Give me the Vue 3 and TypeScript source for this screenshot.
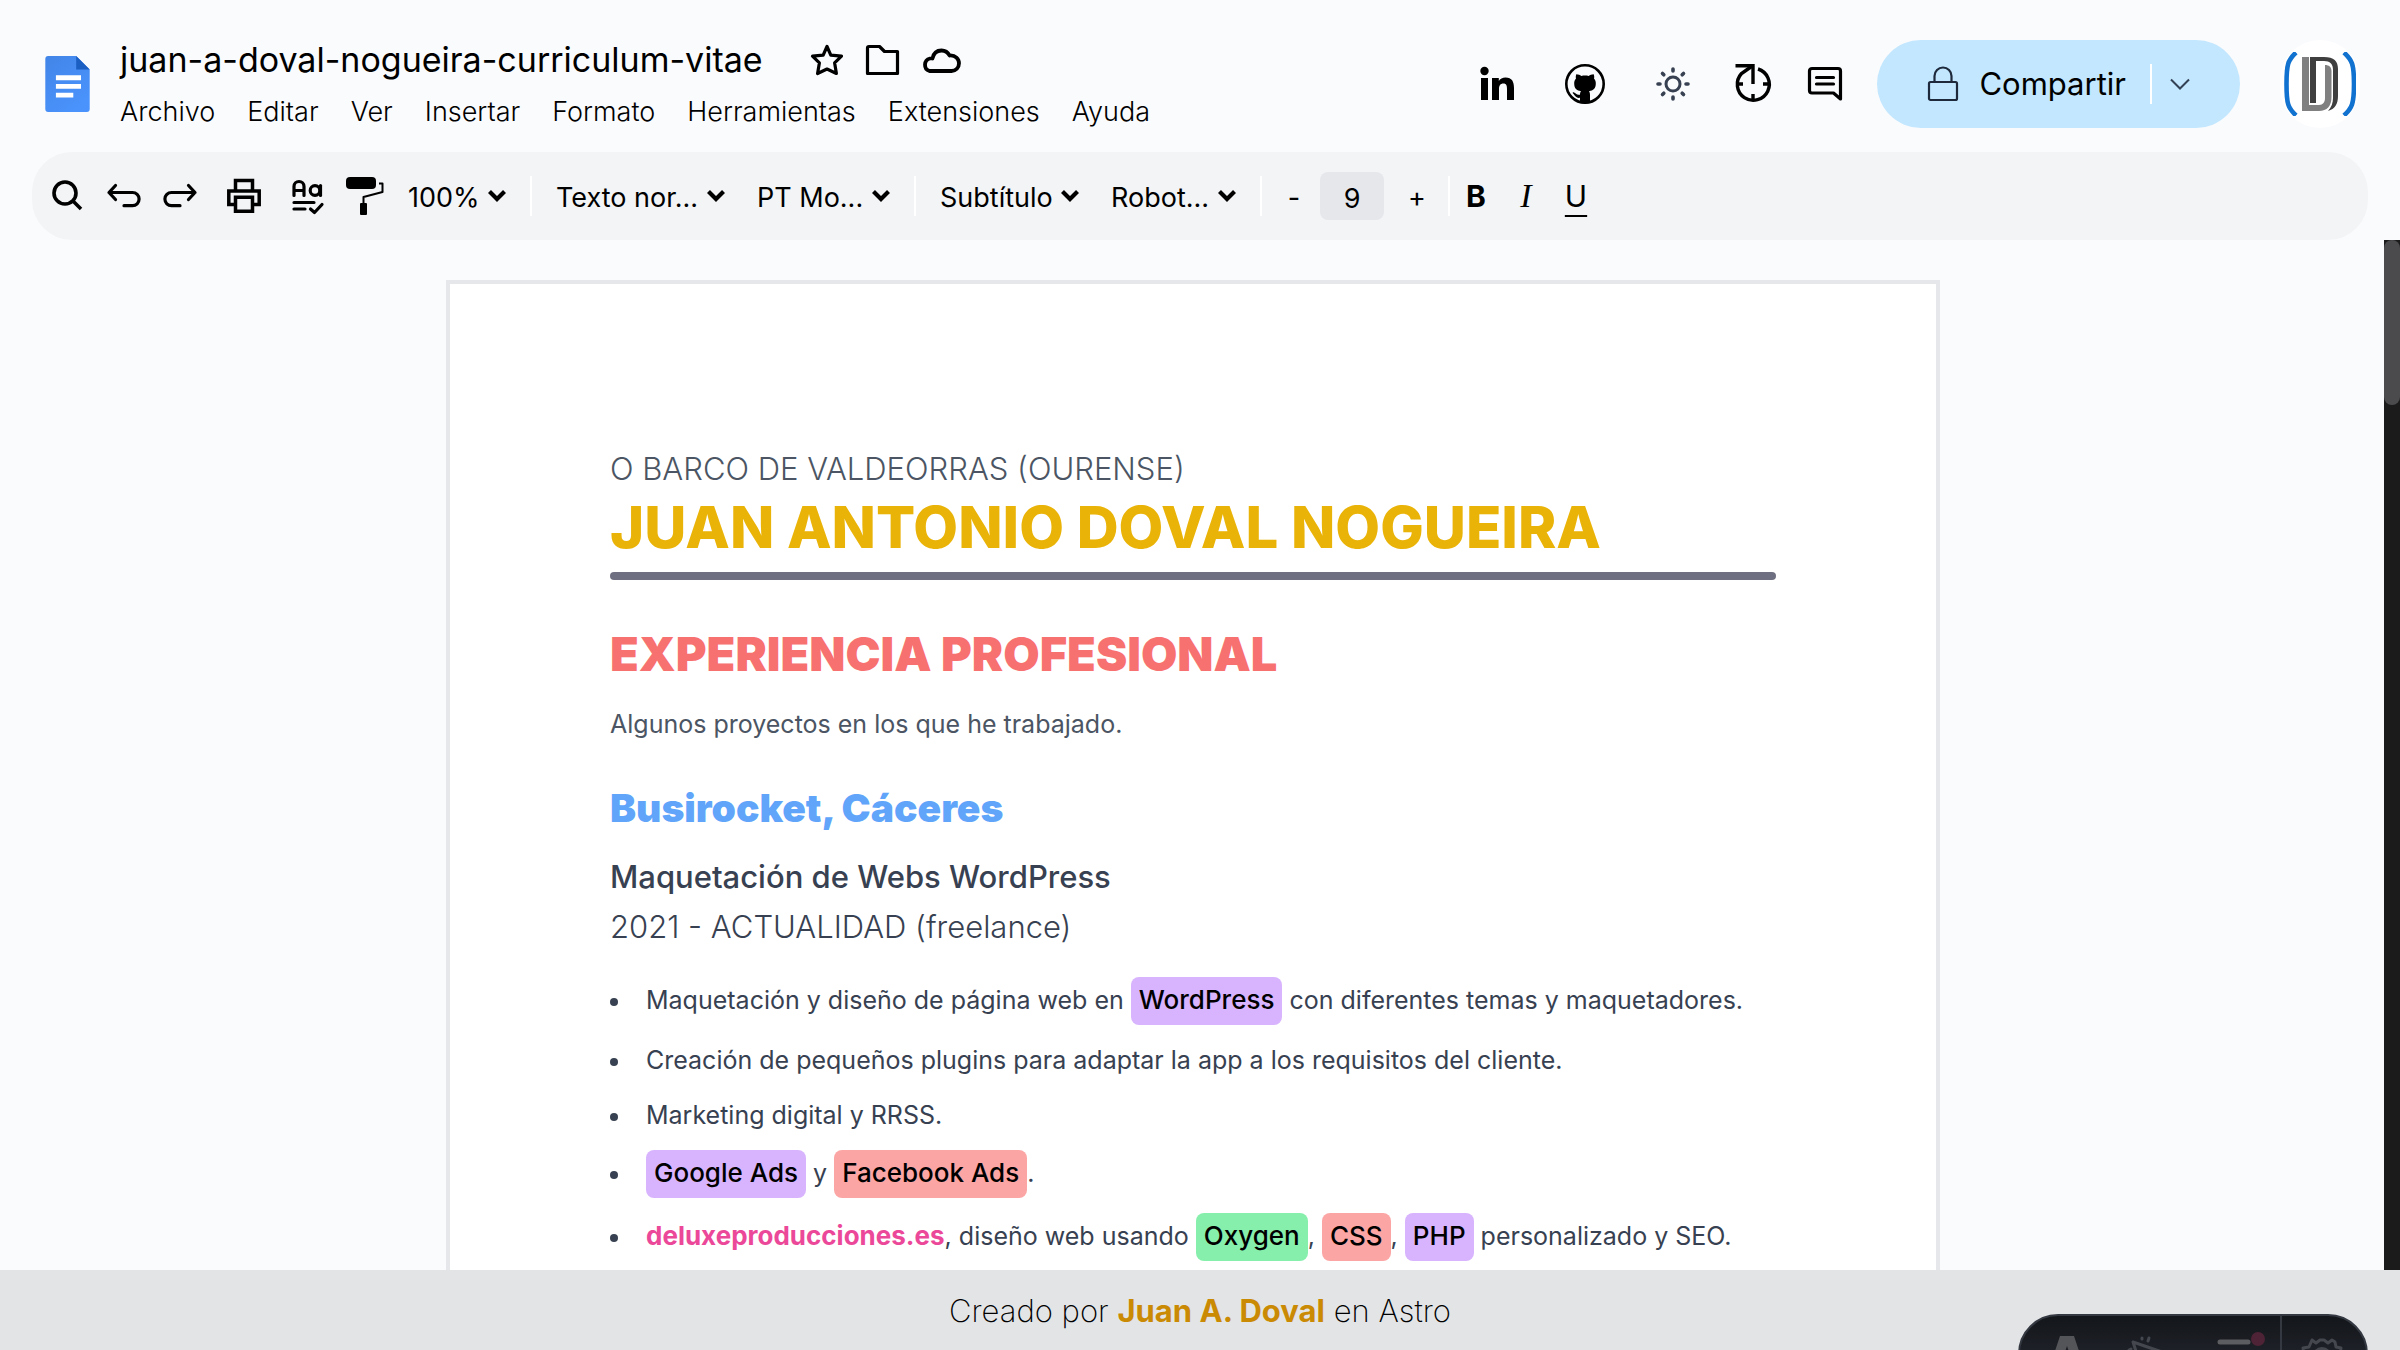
<script setup lang="ts">
type Tone = 'plain' | 'purple' | 'red' | 'green' | 'link'

interface Fragment {
  text: string
  tone: Tone
}

const fileName = 'juan-a-doval-nogueira-curriculum-vitae'

const menus: string[] = [
  'Archivo',
  'Editar',
  'Ver',
  'Insertar',
  'Formato',
  'Herramientas',
  'Extensiones',
  'Ayuda',
]

const styleSelects: string[][] = [
  ['Texto nor...', 'PT Mo...'],
  ['Subtítulo', 'Robot...'],
]

const tasks: Fragment[][] = [
  [
    { text: 'Maquetación y diseño de página web en ', tone: 'plain' },
    { text: 'WordPress', tone: 'purple' },
    { text: ' con diferentes temas y maquetadores.', tone: 'plain' },
  ],
  [{ text: 'Creación de pequeños plugins para adaptar la app a los requisitos del cliente.', tone: 'plain' }],
  [{ text: 'Marketing digital y RRSS.', tone: 'plain' }],
  [
    { text: 'Google Ads', tone: 'purple' },
    { text: ' y ', tone: 'plain' },
    { text: 'Facebook Ads', tone: 'red' },
    { text: '.', tone: 'plain' },
  ],
  [
    { text: 'deluxeproducciones.es', tone: 'link' },
    { text: ', diseño web usando ', tone: 'plain' },
    { text: 'Oxygen', tone: 'green' },
    { text: ', ', tone: 'plain' },
    { text: 'CSS', tone: 'red' },
    { text: ', ', tone: 'plain' },
    { text: 'PHP', tone: 'purple' },
    { text: ' personalizado y SEO.', tone: 'plain' },
  ],
]
</script>

<template>
  <div class="app">
    <header class="header">
      <svg class="doc-icon" viewBox="0 0 46 58" aria-hidden="true">
        <defs>
          <linearGradient id="docFill" x1="0" y1="0" x2="0.6" y2="1">
            <stop offset="0" stop-color="#4285e8" />
            <stop offset="1" stop-color="#4a93fc" />
          </linearGradient>
        </defs>
        <path d="M3 0H32L46 14V55a3 3 0 0 1-3 3H3a3 3 0 0 1-3-3V3a3 3 0 0 1 3-3Z" fill="url(#docFill)" />
        <path d="M32 0L46 14H32Z" fill="#1c5fc2" />
        <path d="M11 20H37V25H11ZM11 29H37V34H11ZM11 38H29V43H11Z" fill="#fff" />
      </svg>

      <div class="file">
        <div class="file-row">
          <h1 class="file-name">{{ fileName }}</h1>
          <div class="file-actions">
            <button class="plain-button" type="button" aria-label="Destacar">
              <svg width="36" height="36" viewBox="0 0 36 36" fill="none" stroke="#000" stroke-width="3.200" stroke-linejoin="round">
                <path d="M18 4.500L21.800 13.200L32.500 14.200L25.600 20.800L27.400 31.500L18 27L8.600 31.500L10.400 20.800L3.500 14.200L14.200 13.200Z" />
              </svg>
            </button>
            <button class="plain-button" type="button" aria-label="Mover">
              <svg width="36" height="36" viewBox="0 0 36 36" fill="none" stroke="#000" stroke-width="3.200" stroke-linejoin="round">
                <path d="M4 4.500H14.500L19.500 9.500H32.500V31.500H2.500V6A1.500 1.500 0 0 1 4 4.500Z" />
              </svg>
            </button>
            <button class="plain-button" type="button" aria-label="Estado del documento">
              <svg width="40" height="36" viewBox="0 0 40 36" fill="none" stroke="#000" stroke-width="3.800" stroke-linejoin="round">
                <path d="M8.500 29A6.500 6.500 0 0 1 9 16.500A7 7 0 0 1 11.500 16.500C12.500 11.500 16 8.500 20.500 8.500C24 8.500 27 10.500 28.500 13.500C34.500 13 38 17 38 21.200C38 25.500 34.800 29 30.500 29Z" />
              </svg>
            </button>
          </div>
        </div>
        <nav class="menus" aria-label="Menú principal">
          <button v-for="menu in menus" :key="menu" class="menu" type="button">{{ menu }}</button>
        </nav>
      </div>

      <div class="header-actions">
        <a class="icon-link" href="#linkedin" aria-label="LinkedIn">
          <svg width="40" height="40" viewBox="0 0 40 40" fill="#000">
            <circle cx="7.500" cy="7" r="4.200" />
            <path d="M4 14H11V36H4ZM15 14H21.800V17C23 14.800 25.500 13.400 28.500 13.400C35 13.400 37 17.500 37 24V36H30V25C30 21.800 29.300 19.600 26.500 19.600C23.300 19.600 22 21.800 22 25V36H15Z" />
          </svg>
        </a>
        <a class="icon-link" href="#github" aria-label="GitHub">
          <svg width="40" height="40" viewBox="0 0 40 40">
            <circle cx="20" cy="20" r="18.700" fill="none" stroke="#000" stroke-width="2.600" />
            <path d="M11.300 10.300C13.500 10.300 15 11 16.300 12C18.700 11.400 21.300 11.400 23.700 12C25 11 26.500 10.300 28.700 10.300C29.400 12.200 29.300 13.500 29 14.500C30.500 16.300 30.800 18 30.800 19.500C30.800 24.500 28.300 26.500 24 27.200C24.800 28.300 25 29.300 25 31V38.700A19 19 0 0 1 15 38.700V33.800C10.500 34.500 9.800 31 8 29.600C7.300 29 7.600 28 8.700 28.300C11 29 11.500 31.500 15 30.700C15 29 15.200 28.200 16 27.200C11.700 26.500 9.200 24.500 9.200 19.500C9.200 18 9.500 16.300 11 14.500C10.700 13.500 10.600 12.200 11.300 10.300Z" fill="#000" />
          </svg>
        </a>
        <button class="plain-button sun" type="button" aria-label="Cambiar tema">
          <svg width="40" height="40" viewBox="0 0 40 40" fill="none" stroke="#374151" stroke-width="3" stroke-linecap="round">
            <circle cx="20" cy="20" r="7" />
            <path d="M20 5V7M20 33V35M5 20H7M33 20H35M9.500 9.500L10.800 10.800M29.200 29.200L30.500 30.500M9.500 30.500L10.800 29.200M29.200 10.800L30.500 9.500" stroke-width="3.600" />
          </svg>
        </button>
        <button class="plain-button history" type="button" aria-label="Historial de versiones">
          <svg width="40" height="40" viewBox="0 0 40 40" fill="none" stroke="#000" stroke-width="3.400">
            <path d="M2.500 1.700H20V20" />
            <path d="M18.500 2.500L8.500 9.500A16 16 0 1 0 25 5" />
            <path d="M4 20H10M30 20H36M20 30V36" />
          </svg>
        </button>
        <button class="plain-button" type="button" aria-label="Comentarios">
          <svg width="36" height="40" viewBox="0 0 36 40" fill="none" stroke="#000" stroke-width="3.200" stroke-linejoin="round" stroke-linecap="round">
            <path d="M5 4.500H31A2.500 2.500 0 0 1 33.500 7V35L26.500 29H5A2.500 2.500 0 0 1 2.500 26.500V7A2.500 2.500 0 0 1 5 4.500Z" />
            <path d="M9.500 13.500H26.500M9.500 20H26.500" />
          </svg>
        </button>

        <div class="share">
          <button class="share-main" type="button">
            <svg width="32" height="40" viewBox="0 0 32 40" fill="none" stroke="#1e293b" stroke-width="2.200">
              <rect x="2" y="18" width="28" height="18" rx="1.500" />
              <path d="M7.500 18V12A8.500 8.500 0 0 1 24.500 12V18" />
            </svg>
            <span>Compartir</span>
          </button>
          <button class="share-more" type="button" aria-label="Más opciones para compartir">
            <svg width="20" height="12" viewBox="0 0 20 12" fill="none" stroke="#334155" stroke-width="2">
              <path d="M1 1.500L10 10.500L19 1.500" />
            </svg>
          </button>
        </div>

        <a class="avatar" href="#perfil" aria-label="Perfil">
          <svg width="72" height="64" viewBox="0 0 72 64" fill="none">
            <path d="M12 0.500C4 8 2.500 12 2.500 32S4 56 12 63.500M60 0.500C68 8 70 12 70 32S68 56 60 63.500" stroke="#1272cf" stroke-width="4.600" />
            <path d="M26 5H40C50 5 54 9 54 17V44C54 52 51 57 44 59C47.500 55 49 51 49 46V18C49 12 46 9 40 9H32V51H26Z" fill="#3f3f3f" />
            <path d="M18 5H25V53H35C39 53 41 50 41 46V13C45 13 47.500 15 47.500 19V45C47.500 54 43 59 35 59H18Z" fill="#808080" />
          </svg>
        </a>
      </div>
    </header>

    <div class="toolbar" role="toolbar" aria-label="Formato">
      <div class="tool-group">
        <button class="plain-button" type="button" aria-label="Buscar">
          <svg width="40" height="40" viewBox="0 0 40 40" fill="none" stroke="#000" stroke-width="3.600">
            <circle cx="17" cy="17" r="11" />
            <path d="M24.500 24.500L33 33" />
          </svg>
        </button>
        <button class="plain-button" type="button" aria-label="Deshacer">
          <svg width="40" height="40" viewBox="0 0 40 40" fill="none" stroke="#000" stroke-width="3.200" stroke-linecap="round" stroke-linejoin="round">
            <path d="M11.500 9.500L5 16.500L11.500 23.500M5 16.500H28.500A6.600 6.600 0 0 1 28.500 29.700H20" />
          </svg>
        </button>
        <button class="plain-button" type="button" aria-label="Rehacer">
          <svg width="40" height="40" viewBox="0 0 40 40" fill="none" stroke="#000" stroke-width="3.200" stroke-linecap="round" stroke-linejoin="round">
            <path d="M28.500 9.500L35 16.500L28.500 23.500M35 16.500H11.500A6.600 6.600 0 0 0 11.500 29.700H20" />
          </svg>
        </button>
      </div>
      <button class="plain-button" type="button" aria-label="Imprimir">
        <svg width="40" height="40" viewBox="0 0 40 40" fill="none" stroke="#000" stroke-width="3.500">
          <path d="M11.500 15V4.600H28.500V15" />
          <path d="M11 28.500H4.800V15H35.200V28.500H29" />
          <path d="M11.500 21.200H28.500V35.200H11.500Z" />
        </svg>
      </button>
      <div class="tool-group">
        <button class="plain-button" type="button" aria-label="Ortografía">
          <svg width="40" height="40" viewBox="0 0 40 40" fill="none" stroke="#000" stroke-width="3.200" stroke-linecap="round" stroke-linejoin="round">
            <path d="M6 19.500V10.500A5 5 0 0 1 16 10.500V19.500M6 14.500H16" />
            <circle cx="27" cy="14.500" r="4.800" />
            <path d="M32.500 9.500V19.500" />
            <path d="M6 26.500H26M6 33H17M22.500 33L26.500 36.500L34 28.500" />
          </svg>
        </button>
        <button class="plain-button" type="button" aria-label="Copiar formato">
          <svg width="40" height="40" viewBox="0 0 40 40">
            <rect x="2" y="1" width="30" height="12" rx="4" fill="#000" />
            <path d="M35 7.500H38.500V16L19.500 21V29" fill="none" stroke="#000" stroke-width="2" stroke-linejoin="round" />
            <rect x="16" y="27" width="7" height="12" rx="1" fill="#000" />
          </svg>
        </button>
      </div>
      <label class="select">
        <select aria-label="Zoom"><option>100%</option></select>
        <svg width="18" height="14" viewBox="0 0 18 14" fill="none" stroke="#000" stroke-width="4.200"><path d="M1.500 2.500L9 10L16.500 2.500" /></svg>
      </label>
      <template v-for="group in styleSelects" :key="group[0]">
        <span class="divider"></span>
        <div class="tool-group wide">
          <label v-for="name in group" :key="name" class="select">
            <select :aria-label="name"><option>{{ name }}</option></select>
            <svg width="18" height="14" viewBox="0 0 18 14" fill="none" stroke="#000" stroke-width="4.200"><path d="M1.500 2.500L9 10L16.500 2.500" /></svg>
          </label>
        </div>
      </template>
      <span class="divider"></span>
      <div class="stepper">
        <button class="step" type="button" aria-label="Reducir">-</button>
        <input class="size" type="text" value="9" aria-label="Tamaño de fuente" />
        <button class="step" type="button" aria-label="Aumentar">+</button>
      </div>
      <span class="divider"></span>
      <div class="marks">
        <button class="mark bold" type="button" aria-label="Negrita">B</button>
        <button class="mark italic" type="button" aria-label="Cursiva">I</button>
        <button class="mark underline" type="button" aria-label="Subrayado">U</button>
      </div>
    </div>

    <div class="workspace">
      <main class="canvas">
        <article class="paper">
          <p class="place">O BARCO DE VALDEORRAS (OURENSE)</p>
          <h1 class="person">JUAN ANTONIO DOVAL NOGUEIRA</h1>
          <hr class="rule" />
          <h2 class="section">EXPERIENCIA PROFESIONAL</h2>
          <p class="intro">Algunos proyectos en los que he trabajado.</p>
          <h3 class="company">Busirocket, Cáceres</h3>
          <h4 class="role">Maquetación de Webs WordPress</h4>
          <p class="dates">2021 - ACTUALIDAD (freelance)</p>
          <ul class="tasks">
            <li v-for="(task, i) in tasks" :key="i">
              <template v-for="(part, j) in task" :key="j">
                <template v-if="part.tone === 'plain'">{{ part.text }}</template>
                <a v-else-if="part.tone === 'link'" class="site" href="#deluxeproducciones">{{ part.text }}</a>
                <mark v-else class="chip" :class="part.tone">{{ part.text }}</mark>
              </template>
            </li>
          </ul>
        </article>
      </main>
      <div class="scroll-track" aria-hidden="true"><div class="scroll-thumb"></div></div>
    </div>

    <footer class="footer">
      <p>Creado por <a href="#autor">Juan A. Doval</a> en Astro</p>
    </footer>

    <div class="dev-bar">
      <button class="plain-button dev-main" type="button" aria-label="Menú de desarrollo">
        <svg width="260" height="78" viewBox="0 0 260 78">
          <path d="M40 20H54L68 62H58L47 30L36 62H26Z" fill="#545559" />
          <g fill="none" stroke="#45474e" stroke-width="3" stroke-linejoin="round" stroke-linecap="round">
            <path d="M124 60L113 26L142 36" />
            <path d="M122 22V23M129 22L128 25M109 34L111 33" />
          </g>
          <path d="M200 26H228M200 40H232M200 54H232" stroke="#5c5d61" stroke-width="5" stroke-linecap="round" />
          <circle cx="238" cy="23" r="7" fill="#4f2336" />
        </svg>
      </button>
      <button class="plain-button dev-settings" type="button" aria-label="Ajustes">
        <svg width="84" height="78" viewBox="0 0 84 78" fill="none" stroke="#45474e" stroke-width="3" stroke-linejoin="round">
          <path d="M30 24L34 27L38 24L42 24L46 27L50 24L53 26L54 31L59 32L58 38L61 41L58 45L59 51L54 52L52 57L46 55L40 59L34 55L28 57L26 52L21 51L22 45L19 41L22 38L21 32L27 31Z" />
          <circle cx="40" cy="41" r="8" stroke-width="4" />
        </svg>
      </button>
    </div>
  </div>
</template>

<style>
body {
  margin: 0;
  background: #fafbfd;
}
</style>

<style scoped>
* {
  box-sizing: border-box;
}

.app {
  display: flex;
  flex-direction: column;
  height: 100vh;
  overflow: hidden;
  background: #fafbfd;
  color: #000;
  font-family: Inter, 'Liberation Sans', sans-serif;
}

h1,
h2,
h3,
h4,
p,
ul {
  margin: 0;
  padding: 0;
}

svg {
  display: block;
  flex: none;
}

button,
select,
input {
  font: inherit;
  color: inherit;
  border: 0;
  background: none;
  padding: 0;
  margin: 0;
}

.plain-button,
.icon-link {
  display: flex;
}

.header {
  display: flex;
  align-items: flex-start;
  padding: 32px 40px 0 45px;
  height: 152px;
}

.doc-icon {
  width: 45px;
  height: 56px;
  margin: 24px 30px 0 0;
}

.file-row {
  display: flex;
  align-items: center;
  gap: 46px;
}

.file-name {
  font-size: 34px;
  line-height: 56px;
  font-weight: 400;
}

.file-actions {
  display: flex;
  gap: 20px;
}

.menus {
  display: flex;
  gap: 32px;
}

.menu {
  font-size: 27px;
  line-height: 48px;
  font-weight: 300;
}

.header-actions {
  display: flex;
  align-items: center;
  margin-left: auto;
  padding-top: 8px;
}

.icon-link {
  margin-right: 48px;
}

.sun {
  margin-right: 40px;
}

.history {
  margin-right: 34px;
}

.share {
  display: flex;
  align-items: center;
  height: 88px;
  margin-left: 34px;
  padding: 0 50px;
  border-radius: 44px;
  background: #c2e7ff;
}

.share-main {
  display: flex;
  align-items: center;
  gap: 20px;
  padding-right: 24px;
  font-size: 31px;
  line-height: 40px;
}

.share-more {
  display: flex;
  align-items: center;
  height: 40px;
  padding-left: 18px;
  border-left: 2px solid #fff;
}

.avatar {
  display: flex;
  align-items: center;
  justify-content: center;
  width: 80px;
  height: 88px;
  margin-left: 40px;
  border-radius: 44px;
  background: #fff;
}

.toolbar {
  display: flex;
  align-items: center;
  gap: 24px;
  height: 88px;
  flex: none;
  margin: 0 32px;
  padding: 0 16px;
  border-radius: 40px;
  background: #f3f4f6;
  font-size: 27px;
  line-height: 40px;
}

.tool-group {
  display: flex;
  gap: 16px;
}

.tool-group.wide {
  gap: 32px;
}

.select {
  display: flex;
  align-items: center;
  gap: 8px;
}

.select select {
  appearance: none;
  padding-top: 4px;
  line-height: 40px;
}

.divider {
  width: 2px;
  height: 40px;
  background: #fff;
}

.stepper {
  display: flex;
  align-items: center;
  gap: 16px;
}

.step {
  width: 16px;
  padding-top: 4px;
}

.size {
  width: 64px;
  height: 48px;
  margin: 0 8px 0 2px;
  padding-top: 4px;
  border-radius: 8px;
  background: #e5e7eb;
  text-align: center;
}

.marks {
  display: flex;
  gap: 26px;
  margin-left: -10px;
  font-size: 30px;
}

.mark {
  width: 24px;
}

.bold {
  font-weight: 700;
}

.italic {
  font-family: 'Liberation Serif', serif;
  font-style: italic;
  font-size: 34px;
}

.underline {
  text-decoration: underline;
  text-decoration-thickness: 2px;
  text-underline-offset: 8px;
}

.workspace {
  display: flex;
  flex: 1;
  min-height: 0;
}

.canvas {
  flex: 1;
  padding: 40px 22px 40px 24px;
  overflow: auto;
  scrollbar-width: none;
}

.paper {
  max-width: 1494px;
  margin: 0 auto;
  padding: 162px 160px;
  border: 4px solid #e5e7eb;
  background: #fff;
  color: #374151;
}

.place {
  font-size: 31px;
  line-height: 46px;
  font-weight: 300;
  color: #4b5563;
}

.person {
  font-size: 58px;
  line-height: 70px;
  font-weight: 800;
  color: #eab308;
}

.rule {
  height: 8px;
  margin: 10px 0 50px;
  border: 0;
  border-radius: 4px;
  background: #6f6f82;
}

.section {
  font-size: 47px;
  line-height: 48px;
  font-weight: 900;
  color: #f87171;
}

.intro {
  margin: 26px 0 40px;
  font-size: 25px;
  line-height: 40px;
  font-weight: 400;
  color: #4b5563;
}

.company {
  font-size: 39px;
  line-height: 48px;
  font-weight: 900;
  color: #60a5fa;
}

.role {
  margin-top: 20px;
  font-size: 31px;
  line-height: 50px;
  font-weight: 500;
}

.dates {
  font-size: 31px;
  line-height: 50px;
  font-weight: 300;
}

.tasks {
  display: flex;
  flex-direction: column;
  gap: 13px;
  margin-top: 24px;
  padding-left: 36px;
  list-style: none;
  font-size: 25px;
  line-height: 42px;
  font-weight: 400;
}

.tasks li::before {
  content: '';
  display: inline-block;
  width: 8px;
  height: 8px;
  margin: 0 28px 0 -36px;
  border-radius: 50%;
  background: #374151;
  vertical-align: middle;
}

.chip {
  display: inline-block;
  margin: 1px 0;
  padding: 0 8px 2px;
  border-radius: 8px;
  color: #000;
  font-size: 26px;
  font-weight: 500;
  line-height: 46px;
}

.purple {
  background: #d8b4fe;
}

.red {
  background: #fca5a5;
}

.green {
  background: #86efac;
}

.site {
  color: #ec4899;
  font-size: 26px;
  font-weight: 700;
  text-decoration: none;
}

.footer {
  flex: none;
  height: 80px;
  background: #e3e4e6;
  text-align: center;
  font-size: 31px;
  line-height: 82px;
  font-weight: 200;
}

.footer a {
  color: #ca8a04;
  font-weight: 700;
  text-decoration: none;
}

.scroll-track {
  width: 16px;
  background: #1b1b1c;
}

.scroll-thumb {
  height: 16%;
  border-radius: 8px;
  background: #4b4b4d;
}

.dev-bar {
  position: fixed;
  right: 32px;
  bottom: -44px;
  display: flex;
  height: 80px;
  border: 2px solid #343841;
  border-radius: 40px;
  background: linear-gradient(180deg, #13161a, #2b2c37);
  overflow: hidden;
}

.dev-settings {
  border-left: 2px solid #343841;
}
</style>
